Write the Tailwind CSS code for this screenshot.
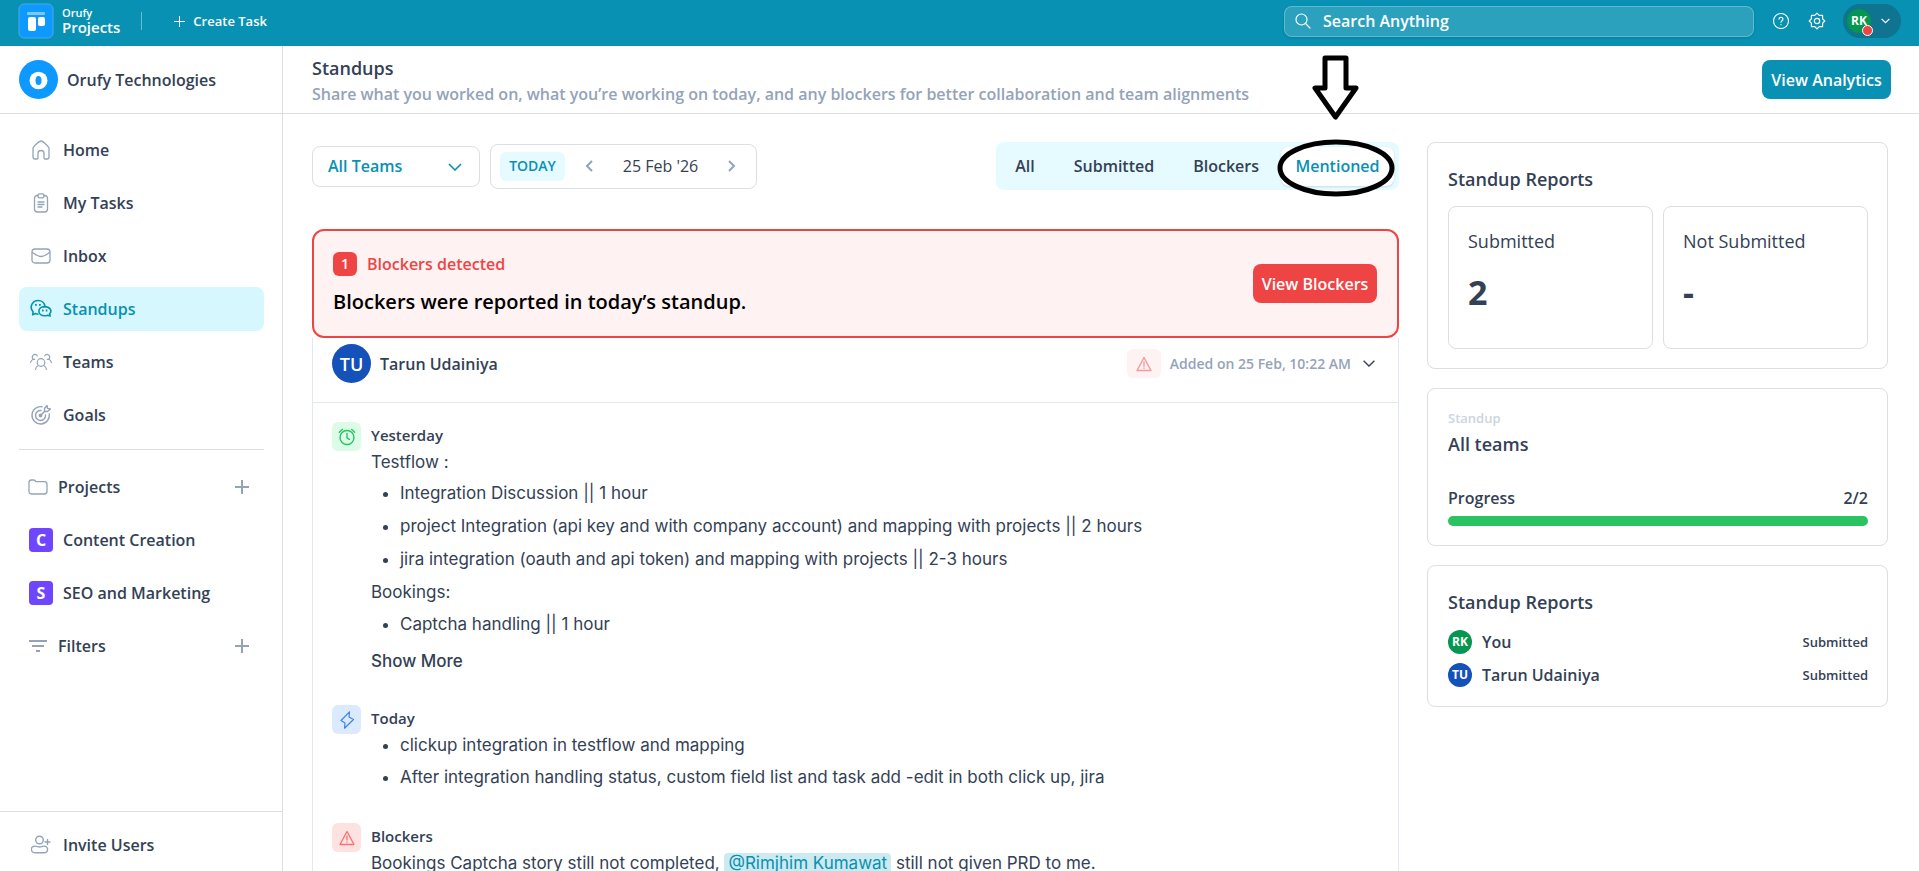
<!DOCTYPE html>
<html lang="en">
<head>
  <meta charset="UTF-8">
  <title>Standups | Orufy Projects</title>
  <meta name="viewport" content="width=device-width, initial-scale=1.0">
  <script src="https://cdn.jsdelivr.net/npm/@tailwindcss/browser@4"></script>
</head>
<body class="h-screen flex flex-col overflow-hidden bg-white text-[#334155] font-['Open_Sans','Noto_Sans',sans-serif] text-[16px] leading-6 font-semibold">

  <!-- Top bar -->
  <header class="h-[46px] shrink-0 bg-[#0891b2] text-white flex items-center justify-between px-[18px] pb-1">
    <div class="flex items-center">
      <svg class="size-9" viewBox="0 0 36 36" fill="none">
        <rect x="1" y="1" width="34" height="34" rx="5" fill="#0d99ff" stroke="#4aa9e8" />
        <rect x="9" y="9" width="18" height="3" rx="1" fill="#7cc8ff" />
        <rect x="10" y="14" width="8" height="14" rx="2" fill="#fff" />
        <rect x="20" y="14" width="7" height="9" rx="2" fill="#fff" />
      </svg>
      <div class="ml-2">
        <p class="text-[11px] leading-3">Orufy</p>
        <p class="text-[15px] leading-4">Projects</p>
      </div>
      <div class="w-px h-[18px] bg-white/40 ml-[21px]"></div>
      <button class="ml-8 flex items-center gap-2 text-[13px]">
        <svg class="size-[11px]" viewBox="0 0 11 11" stroke="currentColor"><path d="M5.5 0v11M0 5.5h11" /></svg>
        Create Task
      </button>
    </div>
    <div class="flex items-center">
      <label class="w-[470px] h-[31px] flex items-center gap-3 rounded-lg border border-white/25 bg-white/15 px-[10px] shadow-sm">
        <svg class="size-4" viewBox="0 0 16 16" fill="none" stroke="currentColor" stroke-width="1.2" stroke-linecap="round"><circle cx="6.5" cy="6.5" r="5.5" /><path d="M11 11l4 4" /></svg>
        <input type="text" aria-label="Search" placeholder="Search Anything" class="flex-1 outline-none placeholder:text-white" />
      </label>
      <button aria-label="Help" class="ml-[18px]">
        <svg class="size-[18px]" viewBox="0 0 18 18" fill="none" stroke="currentColor" stroke-width="1.1" stroke-linecap="round"><circle cx="9" cy="9" r="7.5" /><path d="M7 7.3c0-2.6 4-2.6 4 0 0 1.5-2 1.5-2 3" /><path d="M9 12.6v.2" /></svg>
      </button>
      <button aria-label="Settings" class="ml-[18px]">
        <svg class="size-[18px]" viewBox="0 0 18 18" fill="none" stroke="currentColor" stroke-width="1.2" stroke-linejoin="round"><path d="M9 1.2l2.2 2.2h3.4v3.4L16.8 9l-2.2 2.2v3.4h-3.4L9 16.8l-2.2-2.2H3.4v-3.4L1.2 9l2.2-2.2V3.4h3.4z" /><circle cx="9" cy="9" r="2.7" /></svg>
      </button>
      <button class="ml-[17px] h-[34px] w-[58px] rounded-full bg-[#0e7490] flex items-center gap-2 pl-1">
        <span class="relative size-6 rounded-full bg-[#059650] text-[12px] font-bold flex items-center justify-center">RK
          <span class="absolute -right-[2px] -bottom-[3px] size-[11px] rounded-full bg-[#ef4444] border border-white"></span>
        </span>
        <svg class="ml-[2px] w-[9px] h-[6px]" viewBox="0 0 9 6" fill="none" stroke="currentColor" stroke-width="1.2"><path d="M.6.8l3.900 3.900L8.400.8" /></svg>
      </button>
    </div>
  </header>

  <div class="flex flex-1 min-h-0">

    <!-- Sidebar -->
    <aside class="w-[283px] shrink-0 border-r border-[#dcdee3] flex flex-col">
      <div class="h-[68px] shrink-0 border-b border-[#dcdee3] flex items-center gap-[9px] pl-[19px]">
        <svg class="size-[39px]" viewBox="0 0 39 39"><circle cx="19.5" cy="19.5" r="19.5" fill="#0d99ff" /><ellipse cx="19.5" cy="20.5" rx="9" ry="8.7" fill="#fff" /><ellipse cx="19.5" cy="20.5" rx="3" ry="4.5" fill="#0d99ff" /></svg>
        Orufy Technologies
      </div>
      <nav class="pl-[19px] pr-[18px] pt-[14px] flex flex-col gap-[9px]">
        <a href="#" class="h-11 rounded-lg flex items-center gap-3 pl-3">
          <svg class="size-5 text-[#94a3b8]" viewBox="0 0 20 20" fill="none" stroke="currentColor" stroke-width="1.3" stroke-linejoin="round"><path d="M2 8.500C2 6.500 8.500 1 10 1s8 5.500 8 7.500V17q0 2-2 2h-2q-1 0-1-1v-4.500c0-4-6-4-6 0V18q0 1-1 1H4q-2 0-2-2z" /></svg>
          Home</a>
        <a href="#" class="h-11 rounded-lg flex items-center gap-3 pl-3">
          <svg class="size-5 text-[#94a3b8]" viewBox="0 0 20 20" fill="none" stroke="currentColor" stroke-width="1.3" stroke-linecap="round"><path d="M7 2.500h-.5Q3.500 2.500 3.500 5.500V16q0 3 3 3h7q3 0 3-3V5.500q0-3-3-3H13" /><rect x="7" y=".8" width="6" height="4" rx="1.5" /><path d="M7 9h6M7 11.500h6M7 14h4" /></svg>
          My Tasks</a>
        <a href="#" class="h-11 rounded-lg flex items-center gap-3 pl-3">
          <svg class="size-5 text-[#94a3b8]" viewBox="0 0 20 20" fill="none" stroke="currentColor" stroke-width="1.3" stroke-linecap="round"><rect x="1" y="3" width="18" height="14" rx="3" /><path d="M1.500 6.500Q7 10.500 10 10.500t8.500-4" /></svg>
          Inbox</a>
        <a href="#" class="h-11 rounded-lg flex items-center gap-3 pl-3 bg-[#d7f7fe] text-[#0891b2]">
          <svg class="w-[22px] h-5 -mx-px" viewBox="0 0 22 20" fill="none" stroke="currentColor" stroke-width="1.6" stroke-linejoin="round"><path d="M8.500 15.200q-1.600 0-3-.6L2.600 15.800l.5-3C-1.200 8.200 2.500 1.500 8 1.500c3.600 0 6.500 2.500 7 5.800" /><path d="M14.500 7.600c-7.500.2-7.500 9.200.2 9.200q1.600 0 3-.6l2.500.8-.6-2.200c3-3.400.2-7.200-5.100-7.200z" /><path stroke-width="1.8" d="M5 5.800h1.800M9 5.800h1.800M12 11.500h1.600M15.800 11.500h1.600" /></svg>
          Standups</a>
        <a href="#" class="h-11 rounded-lg flex items-center gap-3 pl-3">
          <svg class="w-[22px] h-5 -mx-px text-[#94a3b8]" viewBox="0 0 22 20" fill="none" stroke="currentColor" stroke-width="1.2" stroke-linecap="round"><circle cx="11" cy="10.5" r="3.8" /><path d="M5.500 17.500q.5-3 2.800-4M16.500 17.500q-.5-3-2.800-4M7.300 3.800C4.800 0 .3 4.500 3.200 7.300Q1 8.200.6 10.500M14.700 3.800c2.500-3.800 7 .7 4.100 3.500q2.200.9 2.600 3.200M3.200 7.300h1.500M18.800 7.300h-1.500" /></svg>
          Teams</a>
        <a href="#" class="h-11 rounded-lg flex items-center gap-3 pl-3">
          <svg class="size-5 text-[#94a3b8]" viewBox="0 0 20 20" fill="none" stroke="currentColor" stroke-width="1.4" stroke-linecap="round" stroke-linejoin="round"><path d="M11 1.700A8.700 8.700 0 1 0 18.300 9" /><path d="M10 5.500A5 5 0 1 0 14.500 10" /><circle cx="9.5" cy="10.5" r="1.2" fill="currentColor" /><path d="M9.500 10.500l4-4V3.500l2.500-3 .6 2.900 2.900.6-3 2.500h-3" /></svg>
          Goals</a>
      </nav>
      <hr class="ml-[19px] mr-[18px] mt-3 border-[#dcdee3]">
      <div class="px-[19px] pt-[15px] flex flex-col gap-[9px]">
        <div class="h-11 flex items-center gap-[10px] pl-[9px] pr-[14px]">
          <svg class="size-5 text-[#94a3b8]" viewBox="0 0 20 20" fill="none" stroke="currentColor" stroke-width="1.3" stroke-linejoin="round"><path d="M1 5.500Q1 3 3.500 3h2Q7 3 8 4.700h8.200q2.800 0 2.800 2.800v6.700q0 2.800-2.800 2.800H3.800Q1 17 1 14.200z" /></svg>
          <span class="flex-1">Projects</span>
          <button aria-label="Add project"><svg class="size-[14px] text-[#94a3b8]" viewBox="0 0 14 14" stroke="currentColor" stroke-width="2"><path d="M7 0v14M0 7h14" /></svg></button>
        </div>
        <a href="#" class="h-11 flex items-center gap-[10px] pl-[10px]"><span class="size-6 rounded bg-[#6f46ff] text-white font-bold flex items-center justify-center">C</span>Content Creation</a>
        <a href="#" class="h-11 flex items-center gap-[10px] pl-[10px]"><span class="size-6 rounded bg-[#6f46ff] text-white font-bold flex items-center justify-center">S</span>SEO and Marketing</a>
        <div class="h-11 flex items-center gap-[10px] pl-[9px] pr-[14px]">
          <svg class="size-5 text-[#94a3b8]" viewBox="0 0 20 20" stroke="currentColor" stroke-width="2"><path d="M1 5h18M4 10h12M8 15h4" /></svg>
          <span class="flex-1">Filters</span>
          <button aria-label="Add filter"><svg class="size-[14px] text-[#94a3b8]" viewBox="0 0 14 14" stroke="currentColor" stroke-width="2"><path d="M7 0v14M0 7h14" /></svg></button>
        </div>
      </div>
      <a href="#" class="mt-auto h-[60px] shrink-0 border-t border-[#dcdee3] flex items-center gap-3 pl-[31px] pt-[6px]">
        <svg class="size-5 text-[#94a3b8]" viewBox="0 0 20 20" fill="none" stroke="currentColor" stroke-width="1.4" stroke-linecap="round"><circle cx="8.5" cy="5" r="3.8" /><path d="M8.500 12c1.500 0 2.500-.9 4.500-.9 5 0 4.500 6.700 0 6.700H4c-4.500 0-5-6.700 0-6.700 2 0 3 .9 4.500.9zM16.500 4.500v5M14 7h5" /></svg>
        Invite Users</a>
    </aside>

    <!-- Main area -->
    <div class="flex-1 min-w-0 flex flex-col">
      <div class="h-[68px] shrink-0 border-b border-[#dcdee3] flex items-center justify-between pl-[29px] pr-7">
        <div>
          <h1 class="text-[18px] leading-7">Standups</h1>
          <p class="text-[#94a3b8]">Share what you worked on, what you’re working on today, and any blockers for better collaboration and team alignments</p>
        </div>
        <button class="h-[39px] w-[129px] rounded-lg bg-[#0891b2] text-white">View Analytics</button>
      </div>

      <div class="flex-1 min-h-0 flex gap-7 pl-[29px] pr-[31px]">

        <!-- Feed -->
        <main class="flex-1 min-w-0 flex flex-col">
          <div class="mt-7 mb-[39px] h-[48px] flex items-center justify-between">
            <div class="flex items-center gap-[10px]">
              <div class="relative">
                <select aria-label="Team" class="appearance-none w-[168px] h-[41px] rounded-lg border border-[#dcdee3] pl-[15px] text-[#0891b2]">
                  <option>All Teams</option>
                </select>
                <svg class="absolute right-[18px] top-[17px] w-[14px] h-2 pointer-events-none" viewBox="0 0 14 8" fill="none" stroke="#0891b2" stroke-width="1.6"><path d="M1 1l6 6 6-6" /></svg>
              </div>
              <div class="h-[45px] w-[267px] rounded-lg border border-[#dcdee3] flex items-center pl-[9px]">
                <button class="h-[29px] w-[65px] rounded-md bg-[#e6fbff] text-[#0891b2] text-[14px]">TODAY</button>
                <button aria-label="Previous day" class="ml-5"><svg class="w-2 h-3" viewBox="0 0 8 12" fill="none" stroke="#94a3b8" stroke-width="2"><path d="M7 1L2 6l5 5" /></svg></button>
                <span class="flex-1 text-center font-normal">25 Feb '26</span>
                <button aria-label="Next day" class="mr-5"><svg class="w-2 h-3" viewBox="0 0 8 12" fill="none" stroke="#94a3b8" stroke-width="2"><path d="M1 1l5 5-5 5" /></svg></button>
              </div>
            </div>
            <div class="relative h-[48px] rounded-lg bg-[#e6fbff] flex items-center p-[5px]">
              <button class="px-[14px]">All</button>
              <button class="px-[25px]">Submitted</button>
              <button class="px-[14px]">Blockers</button>
              <button class="ml-2 h-[39px] w-[113px] rounded-lg bg-white shadow text-[#0891b2]">Mentioned</button>
              <!-- Hand-drawn arrow and ring over the Mentioned tab -->
              <svg class="absolute right-0 -top-[90px] w-[124px] h-[150px] pointer-events-none" viewBox="0 0 124 150" fill="none" stroke="#000" stroke-width="5" stroke-linejoin="round"><path d="M50 6h21v30h10L60.500 65 40 36h10z" fill="#fff" /><ellipse cx="61" cy="116" rx="56" ry="26" /></svg>
            </div>
          </div>

          <section class="h-[109px] shrink-0 rounded-xl border-2 border-[#ef4444] bg-[#fef2f2] flex items-center justify-between pl-[19px] pr-5">
            <div>
              <div class="flex items-center gap-[10px] text-[#ef4444]">
                <span class="size-6 rounded-md bg-[#ef4444] text-white text-[14px] flex items-center justify-center">1</span>
                Blockers detected
              </div>
              <p class="mt-3 text-[20px] leading-7 text-black">Blockers were reported in today’s standup.</p>
            </div>
            <button class="h-[39px] w-[124px] rounded-lg bg-[#ef4444] text-white">View Blockers</button>
          </section>

          <article class="flex-1 min-h-0 overflow-hidden border-x border-[#e2e8f0]">
            <div class="h-[65px] border-b border-[#e2e8f0] flex items-start justify-between px-[19px] pt-[6px]">
              <div class="flex items-center gap-[9px]">
                <span class="size-[39px] rounded-full bg-[#1451b8] text-white text-[18px] flex items-center justify-center">TU</span>
                Tarun Udainiya
              </div>
              <div class="h-[39px] flex items-center text-[14px] text-[#94a3b8]">
                <span class="w-[34px] h-[29px] rounded-md bg-[#fef2f2] flex items-center justify-center mr-[9px]">
                  <svg class="size-4" viewBox="0 0 16 16" fill="none" stroke="#f59a9a" stroke-width="1.4" stroke-linecap="round" stroke-linejoin="round"><path d="M8 1.500L15 14.500H1z" /><path d="M8 6v4M8 12v.2" /></svg>
                </span>
                Added on 25 Feb, 10:22 AM
                <svg class="ml-3 mr-1 w-3 h-[7px]" viewBox="0 0 12 7" fill="none" stroke="#334155" stroke-width="1.4"><path d="M.6.8L6 6l5.400-5.200" /></svg>
              </div>
            </div>

            <div class="px-[19px] font-['Inter',sans-serif] font-normal text-[17px] leading-6">
              <div class="flex gap-[10px] pt-[19px]">
                <span class="size-[29px] shrink-0 rounded-md bg-[#dcfce7] flex items-center justify-center">
                  <svg class="size-[18px]" viewBox="0 0 18 18" fill="none" stroke="#22c55e" stroke-width="1.4" stroke-linecap="round"><circle cx="9" cy="9.5" r="7" /><path d="M9 5.500v4.300l2.500 1.500M1.300 4.200l3-2.700M16.700 4.200l-3-2.700" /></svg>
                </span>
                <div>
                  <h2 class="font-['Open_Sans',sans-serif] font-semibold text-[15px] leading-[26px]">Yesterday</h2>
                  <p class="leading-[29px]">Testflow :</p>
                  <ul class="list-disc pl-[29px] leading-[33px]">
                    <li>Integration Discussion || 1 hour</li>
                    <li>project Integration (api key and with company account) and mapping with projects || 2 hours</li>
                    <li>jira integration (oauth and api token) and mapping with projects || 2-3 hours</li>
                  </ul>
                  <p class="leading-[32px]">Bookings:</p>
                  <ul class="list-disc pl-[29px] leading-[33px]">
                    <li>Captcha handling || 1 hour</li>
                  </ul>
                  <button class="mt-2 font-medium">Show More</button>
                </div>
              </div>

              <div class="flex gap-[10px] pt-8">
                <span class="size-[29px] shrink-0 rounded-md bg-[#dbeafe] flex items-center justify-center">
                  <svg class="size-[18px]" viewBox="0 0 18 18" fill="none" stroke="#3b82f6" stroke-width="1.2" stroke-linejoin="round"><path d="M11.500.8L3 9.500l4 2.500-.5 5.200L15.500 8.500 11 6z" /></svg>
                </span>
                <div>
                  <h2 class="font-['Open_Sans',sans-serif] font-semibold text-[15px] leading-[26px]">Today</h2>
                  <ul class="list-disc pl-[29px]">
                    <li class="leading-7">clickup integration in testflow and mapping</li>
                    <li class="leading-[36px]">After integration handling status, custom field list and task add -edit in both click up, jira</li>
                  </ul>
                </div>
              </div>

              <div class="flex gap-[10px] pt-7">
                <span class="size-[29px] shrink-0 rounded-md bg-[#fee2e2] flex items-center justify-center">
                  <svg class="size-4" viewBox="0 0 16 16" fill="none" stroke="#f87171" stroke-width="1.3" stroke-linecap="round" stroke-linejoin="round"><path d="M8 1.500L15 14.500H1z" /><path d="M8 6v4M8 12v.2" /></svg>
                </span>
                <div>
                  <h2 class="font-['Open_Sans',sans-serif] font-semibold text-[15px] leading-[26px]">Blockers</h2>
                  <p class="leading-7">Bookings Captcha story still not completed, <a href="#" class="rounded bg-[#cdeaf0] text-[#0891b2] px-1">@Rimjhim Kumawat</a> still not given PRD to me.</p>
                </div>
              </div>
            </div>
          </article>
        </main>

        <!-- Right column -->
        <aside class="w-[461px] shrink-0 pt-7 flex flex-col gap-[19px]">
          <section class="rounded-lg border border-[#dcdee3] pl-5 pr-[19px] pt-[22px] pb-[19px]">
            <h2 class="text-[18px] leading-7">Standup Reports</h2>
            <div class="mt-[13px] grid grid-cols-2 gap-[10px]">
              <div class="h-[143px] rounded-lg border border-[#dcdee3] px-[19px] pt-[22px]">
                <p class="font-normal text-[18px]">Submitted</p>
                <p class="mt-[19px] text-[34px] leading-10 font-bold">2</p>
              </div>
              <div class="h-[143px] rounded-lg border border-[#dcdee3] px-[19px] pt-[22px]">
                <p class="font-normal text-[18px]">Not Submitted</p>
                <p class="mt-[19px] text-[34px] leading-10 font-bold">-</p>
              </div>
            </div>
          </section>

          <section class="rounded-lg border border-[#dcdee3] pl-5 pr-[19px] pt-[17px] pb-[19px]">
            <p class="text-[13px] text-[#cbd5e1]">Standup</p>
            <h2 class="text-[18px] leading-7">All teams</h2>
            <div class="mt-7 flex justify-between"><span>Progress</span><span>2/2</span></div>
            <div class="mt-[6px] h-[10px] rounded-full bg-[#29c362]"></div>
          </section>

          <section class="rounded-lg border border-[#dcdee3] pl-5 pr-[19px] pt-[22px] pb-[15px]">
            <h2 class="text-[18px] leading-7">Standup Reports</h2>
            <div class="mt-[9px] h-[33px] flex items-center gap-[10px]">
              <span class="size-6 rounded-full bg-[#059650] text-white text-[12px] font-bold flex items-center justify-center">RK</span>
              <span class="flex-1">You</span>
              <span class="text-[13px]">Submitted</span>
            </div>
            <div class="h-[33px] flex items-center gap-[10px]">
              <span class="size-6 rounded-full bg-[#1451b8] text-white text-[12px] font-bold flex items-center justify-center">TU</span>
              <span class="flex-1">Tarun Udainiya</span>
              <span class="text-[13px]">Submitted</span>
            </div>
          </section>
        </aside>
      </div>
    </div>
  </div>

</body>
</html>
